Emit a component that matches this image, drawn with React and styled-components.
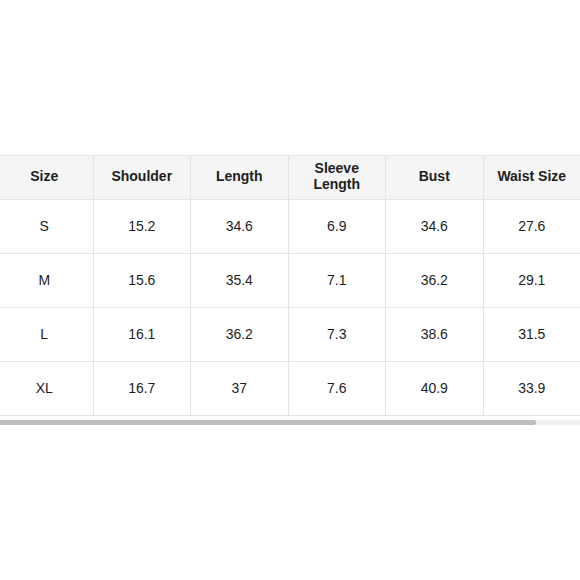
import React from "react";
import styled, { createGlobalStyle } from "styled-components";

const Global = createGlobalStyle`
  html, body { margin: 0; padding: 0; background: #ffffff; }
  body { font-family: "Liberation Sans", Arial, sans-serif; color: #1c1c1c; overflow: hidden; }
`;

const Page = styled.div`
  width: 580px;
  height: 580px;
  padding-top: 155px;
  box-sizing: border-box;
  overflow: hidden;
`;

const Scroller = styled.div`
  margin-left: -5px;
  width: 586px;
`;

const Table = styled.div`
  display: grid;
  grid-template-columns: repeat(6, 97.5px);
  border-top: 1px solid #e4e4e4;
  border-left: 1px solid #e4e4e4;
`;

const Cell = styled.div`
  box-sizing: border-box;
  height: ${(p) => (p.$head ? "44px" : "54px")};
  padding-bottom: ${(p) => (p.$head ? "4px" : "2px")};
  display: flex;
  align-items: center;
  justify-content: center;
  text-align: center;
  white-space: pre-line;
  font-size: 14px;
  line-height: 16px;
  font-weight: ${(p) => (p.$head ? 700 : 400)};
  background: ${(p) => (p.$head ? "#f5f5f5" : "#ffffff")};
  border-right: 1px solid #e4e4e4;
  border-bottom: 1px solid #e4e4e4;
  color: #1e1e1e;
`;

const Track = styled.div`
  margin-top: 4px;
  margin-left: 5px;
  width: 580px;
  height: 5px;
  background: #f0f0f0;
  display: flex;
`;

const Thumb = styled.div`
  width: 536px;
  height: 5px;
  background: #bdbdbd;
  border-radius: 0 3px 3px 0;
`;

const headers = ["Size", "Shoulder", "Length", "Sleeve\nLength", "Bust", "Waist Size"];
const rows = [
  ["S", "15.2", "34.6", "6.9", "34.6", "27.6"],
  ["M", "15.6", "35.4", "7.1", "36.2", "29.1"],
  ["L", "16.1", "36.2", "7.3", "38.6", "31.5"],
  ["XL", "16.7", "37", "7.6", "40.9", "33.9"],
];

export default function App() {
  return (
    <Page>
      <Global />
      <Scroller>
        <Table>
          {headers.map((h) => (
            <Cell key={h} $head>
              {h}
            </Cell>
          ))}
          {rows.map((r, i) =>
            r.map((v, j) => <Cell key={i + "-" + j}>{v}</Cell>)
          )}
        </Table>
        <Track>
          <Thumb />
        </Track>
      </Scroller>
    </Page>
  );
}
